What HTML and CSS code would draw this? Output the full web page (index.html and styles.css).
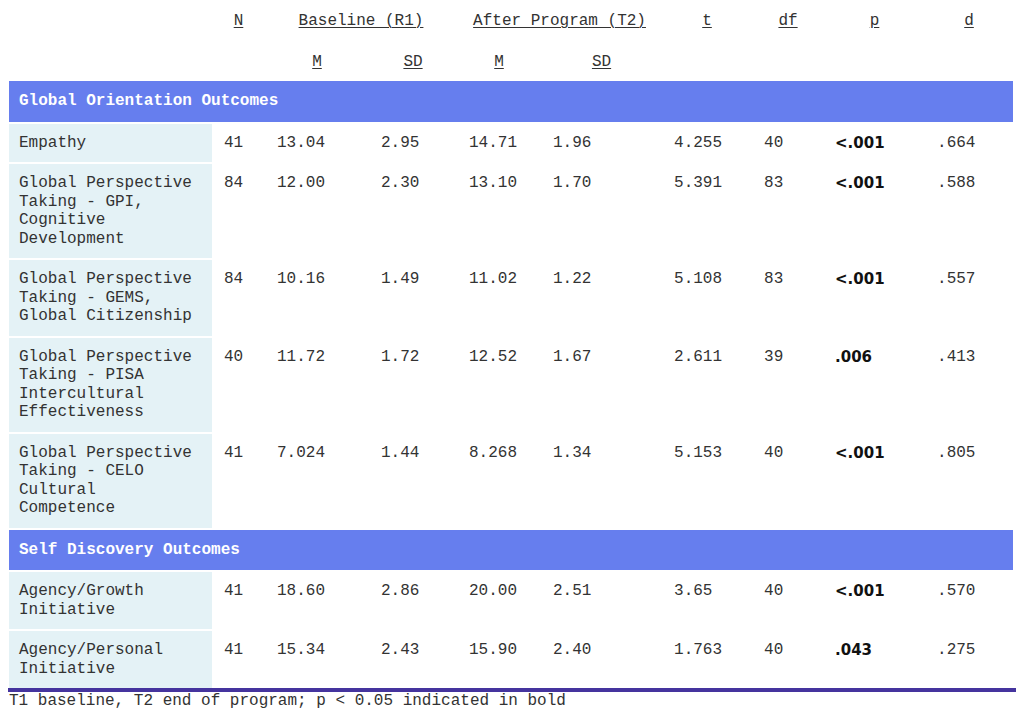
FILE: index.html
```html
<!DOCTYPE html>
<html lang="en">
<head>
<meta charset="utf-8">
<title>Program Outcomes</title>
<link rel="stylesheet" href="styles.css">
</head>
<body>
<div class="wrap">
<table class="stats">
  <colgroup>
    <col class="c-label"><col class="c-n"><col class="c-bm"><col class="c-bsd"><col class="c-am"><col class="c-asd"><col class="c-t"><col class="c-df"><col class="c-p"><col class="c-d">
  </colgroup>
  <thead>
    <tr class="h1">
      <th></th>
      <th><u>N</u></th>
      <th colspan="2"><u>Baseline (R1)</u></th>
      <th colspan="2"><u>After Program (T2)</u></th>
      <th><u>t</u></th>
      <th><u>df</u></th>
      <th><u>p</u></th>
      <th><u>d</u></th>
    </tr>
    <tr class="h2">
      <th></th>
      <th></th>
      <th><u>M</u></th>
      <th><u>SD</u></th>
      <th><u>M</u></th>
      <th><u>SD</u></th>
      <th></th><th></th><th></th><th></th>
    </tr>
  </thead>
  <tbody>
    <tr class="section"><td colspan="10">Global Orientation Outcomes</td></tr>
    <tr>
      <td class="label">Empathy</td>
      <td>41</td><td>13.04</td><td>2.95</td><td>14.71</td><td>1.96</td><td>4.255</td><td>40</td><td class="sig">&lt;.001</td><td>.664</td>
    </tr>
    <tr>
      <td class="label">Global Perspective Taking - GPI, Cognitive Development</td>
      <td>84</td><td>12.00</td><td>2.30</td><td>13.10</td><td>1.70</td><td>5.391</td><td>83</td><td class="sig">&lt;.001</td><td>.588</td>
    </tr>
    <tr>
      <td class="label">Global Perspective Taking - GEMS, Global Citizenship</td>
      <td>84</td><td>10.16</td><td>1.49</td><td>11.02</td><td>1.22</td><td>5.108</td><td>83</td><td class="sig">&lt;.001</td><td>.557</td>
    </tr>
    <tr>
      <td class="label">Global Perspective Taking - PISA Intercultural Effectiveness</td>
      <td>40</td><td>11.72</td><td>1.72</td><td>12.52</td><td>1.67</td><td>2.611</td><td>39</td><td class="sig">.006</td><td>.413</td>
    </tr>
    <tr>
      <td class="label">Global Perspective Taking - CELO Cultural Competence</td>
      <td>41</td><td>7.024</td><td>1.44</td><td>8.268</td><td>1.34</td><td>5.153</td><td>40</td><td class="sig">&lt;.001</td><td>.805</td>
    </tr>
    <tr class="section"><td colspan="10">Self Discovery Outcomes</td></tr>
    <tr>
      <td class="label">Agency/Growth Initiative</td>
      <td>41</td><td>18.60</td><td>2.86</td><td>20.00</td><td>2.51</td><td>3.65</td><td>40</td><td class="sig">&lt;.001</td><td>.570</td>
    </tr>
    <tr>
      <td class="label">Agency/Personal Initiative</td>
      <td>41</td><td>15.34</td><td>2.43</td><td>15.90</td><td>2.40</td><td>1.763</td><td>40</td><td class="sig">.043</td><td>.275</td>
    </tr>
  </tbody>
</table>
</div>
<p class="note">T1 baseline, T2 end of program; p &lt; 0.05 indicated in bold</p>
</body>
</html>
```

FILE: styles.css
```css
html, body {
  background: #fff;
}
body {
  margin: 8px;
  font-family: "Liberation Mono", "Courier New", monospace;
  font-size: 16px;
  color: #333;
}
.wrap {
  width: 1008px;
  border-bottom: 4px solid #45349e;
}
.stats {
  margin-left: 1px;
  width: 1004px;
  table-layout: fixed;
  border-collapse: collapse;
  line-height: 18.5px;
}
.c-label { width: 203px; }
.c-n { width: 53px; }
.c-bm { width: 104px; }
.c-bsd { width: 88px; }
.c-am { width: 84px; }
.c-asd { width: 121px; }
.c-t { width: 90px; }
.c-df { width: 72px; }
.c-p { width: 101px; }
.c-d { width: 88px; }

th {
  font-weight: normal;
  text-align: center;
  padding: 0;
  color: #333;
}
th u {
  text-decoration: underline;
  text-decoration-thickness: 1px;
  text-underline-offset: 2px;
}
.h1 th {
  padding-top: 4px;
  padding-bottom: 21px;
}
.h2 th {
  padding-top: 1px;
  padding-bottom: 8px;
}

td {
  text-align: left;
  vertical-align: top;
  padding: 10px 12px;
  border-top: 2px solid #fff;
}
td.label {
  background: #e4f2f6;
  padding-left: 10px;
  padding-right: 18px;
}
td.sig {
  font-family: "DejaVu Sans", "Liberation Sans", sans-serif;
  font-size: 15px;
  font-weight: bold;
  color: #111;
  padding-left: 11px;
}
.section td {
  background: #667eee;
  color: #fff;
  font-weight: bold;
  padding: 11px 10px;
}
.note {
  margin: 0;
  padding-left: 1px;
  line-height: 18.5px;
  color: #333;
}
```
